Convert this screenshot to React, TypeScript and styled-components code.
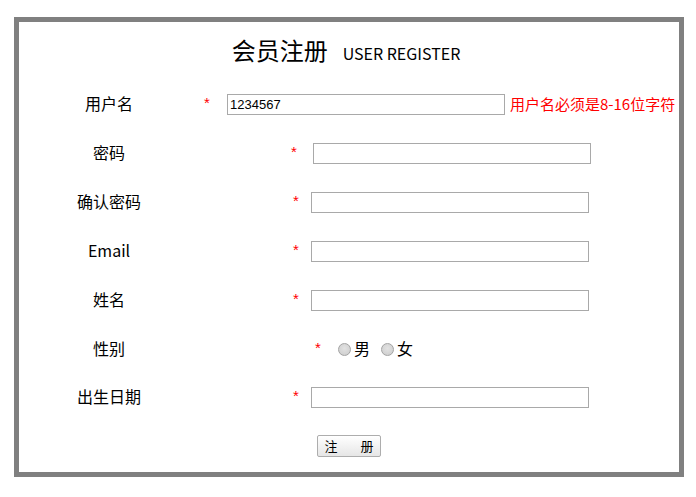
import React from "react";
import styled, { createGlobalStyle } from "styled-components";

const Global = createGlobalStyle`
  html, body { margin: 0; padding: 0; background: #fff; }
  body { font-family: "Noto Sans CJK SC", "Noto Sans", sans-serif; color: #000; }
`;

const Page = styled.div`
  padding: 17px 0 0 14px;
`;

const Box = styled.div`
  width: 660px;
  border: 5px solid #808080;
  padding-bottom: 15px;
`;

const Title = styled.div`
  display: flex;
  justify-content: center;
  align-items: baseline;
  gap: 15px;
  height: 32px;
  margin: 12px 0 14px;
  padding-right: 6px;
  line-height: 32px;
`;

const TitleMain = styled.span`
  font-size: 24px;
`;

const TitleSub = styled.span`
  font-size: 16px;
`;

const Row = styled.div<{ $h: number }>`
  display: grid;
  grid-template-columns: 180px 1fr;
  align-items: center;
  height: ${(p) => p.$h}px;
`;

const Label = styled.div`
  text-align: center;
  font-size: 16px;
  line-height: 20px;
  padding-bottom: 3px;
`;

const Field = styled.div<{ $indent: number }>`
  display: flex;
  align-items: center;
  padding-left: ${(p) => p.$indent}px;
  white-space: nowrap;
`;

const Star = styled.span`
  display: inline-block;
  width: 10px;
  text-align: center;
  color: #ff0000;
  font-family: "Liberation Sans", Arial, sans-serif;
  font-size: 15px;
  line-height: 16px;
  margin-bottom: 3px;
`;

const TextInput = styled.input<{ $gap: number }>`
  box-sizing: border-box;
  width: 278px;
  height: 21px;
  margin: 0 0 0 ${(p) => p.$gap}px;
  padding: 1px 2px;
  border: 1px solid #a9a9a9;
  border-radius: 0;
  font-family: "Liberation Sans", Arial, sans-serif;
  font-size: 13px;
  color: #000;
  outline: none;
`;

const ErrorMsg = styled.span`
  margin-left: 5px;
  color: #ff0000;
  font-size: 15px;
  line-height: 20px;
  padding-bottom: 2px;
`;

const Radio = styled.input<{ $gap: number }>`
  appearance: none;
  -webkit-appearance: none;
  box-sizing: border-box;
  width: 13px;
  height: 13px;
  margin: 0 3px 0 ${(p) => p.$gap}px;
  border: 1px solid #a3a3a3;
  border-radius: 50%;
  background: radial-gradient(circle at 50% 40%, #e2e2e2 0%, #d2d2d2 70%, #c8c8c8 100%);
`;

const RadioText = styled.span`
  font-size: 16px;
  line-height: 20px;
  padding-bottom: 2px;
`;

const ButtonRow = styled.div`
  display: flex;
  justify-content: center;
  margin-top: 13px;
`;

const Submit = styled.button`
  box-sizing: border-box;
  width: 64px;
  height: 22px;
  padding: 0 0 1px;
  border: 1px solid #adadad;
  border-radius: 2px;
  background: linear-gradient(#ffffff, #e6e6e6);
  font-family: "Noto Sans CJK SC", sans-serif;
  font-size: 13px;
  line-height: 20px;
  color: #000;
  display: flex;
  align-items: center;
  justify-content: center;
`;

const Spacer = styled.span`
  display: inline-block;
  width: 23px;
`;

type FieldDef = {
  label: string;
  starX: number;
  inputX: number;
  type?: string;
  value?: string;
  error?: string;
  h: number;
};

const COL_END = 199;

const fields: FieldDef[] = [
  { label: "用户名", starX: 202, inputX: 227, value: "1234567", error: "用户名必须是8-16位字符", h: 49 },
  { label: "密码", starX: 289, inputX: 313, type: "password", h: 49 },
  { label: "确认密码", starX: 291, inputX: 311, type: "password", h: 49 },
  { label: "Email", starX: 291, inputX: 311, h: 49 },
  { label: "姓名", starX: 291, inputX: 311, h: 49 },
];

const birthday: FieldDef = { label: "出生日期", starX: 291, inputX: 311, h: 49 };

function InputRow({ f }: { f: FieldDef }) {
  return (
    <Row $h={f.h}>
      <Label>{f.label}</Label>
      <Field $indent={f.starX - COL_END}>
        <Star>*</Star>
        <TextInput
          $gap={f.inputX - (f.starX + 10)}
          type={f.type ?? "text"}
          defaultValue={f.value ?? ""}
        />
        {f.error && <ErrorMsg>{f.error}</ErrorMsg>}
      </Field>
    </Row>
  );
}

export default function App() {
  return (
    <>
      <Global />
      <Page>
        <Box>
          <Title>
            <TitleMain>会员注册</TitleMain>
            <TitleSub>USER REGISTER</TitleSub>
          </Title>
          {fields.map((f) => (
            <InputRow key={f.label} f={f} />
          ))}
          <Row $h={48}>
            <Label>性别</Label>
            <Field $indent={313 - COL_END}>
              <Star>*</Star>
              <Radio type="radio" name="sex" $gap={15} />
              <RadioText>男</RadioText>
              <Radio type="radio" name="sex" $gap={11} />
              <RadioText>女</RadioText>
            </Field>
          </Row>
          <InputRow f={birthday} />
          <ButtonRow>
            <Submit type="button">
              注<Spacer />册
            </Submit>
          </ButtonRow>
        </Box>
      </Page>
    </>
  );
}
